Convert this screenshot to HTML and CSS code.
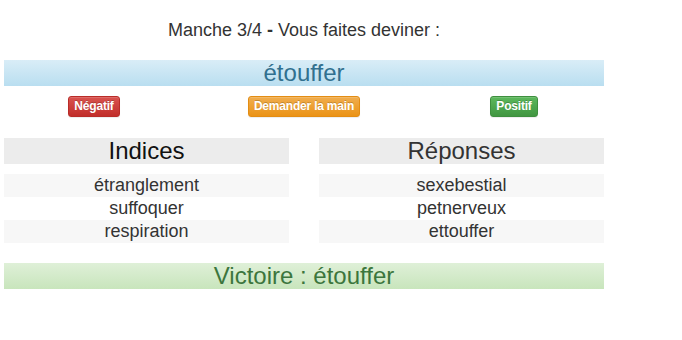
FILE: index.html
```html
<!DOCTYPE html>
<html lang="fr">

<head>
    <meta charset="UTF-8">
    <title>Manche 3/4</title>
    <link rel="stylesheet" href="styles.css">
</head>

<body>
    <div class="game">
        <p class="round">Manche 3/4 <b>-</b> Vous faites deviner :</p>
        <div class="word">étouffer</div>

        <div class="actions">
            <div class="cell"><button class="btn btn-danger">Négatif</button></div>
            <div class="cell"><button class="btn btn-warning">Demander la main</button></div>
            <div class="cell"><button class="btn btn-success">Positif</button></div>
        </div>

        <div class="columns">
            <div class="col">
                <div class="col-title dark">Indices</div>
                <ul class="list">
                    <li>étranglement</li>
                    <li>suffoquer</li>
                    <li>respiration</li>
                </ul>
            </div>
            <div class="col">
                <div class="col-title">Réponses</div>
                <ul class="list">
                    <li>sexebestial</li>
                    <li>petnerveux</li>
                    <li>ettouffer</li>
                </ul>
            </div>
        </div>

        <div class="victory">Victoire : étouffer</div>
    </div>
</body>

</html>
```

FILE: styles.css
```css
body {
    margin: 0;
    background-color: white;
    color: #333;
    font-family: "Liberation Sans", Arial, sans-serif;
}

.game {
    width: 600px;
    margin-left: 4px;
}

.round {
    margin: 17px 0 0 0;
    font-size: 18px;
    line-height: 26px;
    text-align: center;
}

.word {
    margin-top: 17px;
    height: 26px;
    line-height: 26px;
    font-size: 24px;
    text-align: center;
    color: #31708f;
    background-image: linear-gradient(to bottom, #d9edf7 0%, #b9def0 100%);
}

.actions {
    display: grid;
    grid-template-columns: repeat(3, 1fr);
    column-gap: 30px;
    margin-top: 10px;
}

.cell {
    display: flex;
    justify-content: center;
}

.btn {
    font-family: "Liberation Sans", Arial, sans-serif;
    font-size: 12px;
    font-weight: bold;
    letter-spacing: -0.2px;
    line-height: 15px;
    padding: 2px 5px;
    border: 1px solid;
    border-radius: 3px;
    color: white;
    text-shadow: 0 -1px 0 rgba(0, 0, 0, .2);
    box-shadow: inset 0 1px 0 rgba(255, 255, 255, .15), 0 1px 1px rgba(0, 0, 0, .075);
    cursor: pointer;
}

.btn-danger {
    background-image: linear-gradient(to bottom, #d9534f 0%, #c12e2a 100%);
    border-color: #b92c28;
}

.btn-warning {
    background-image: linear-gradient(to bottom, #f0ad4e 0%, #eb9316 100%);
    border-color: #e38d13;
}

.btn-success {
    background-image: linear-gradient(to bottom, #5cb85c 0%, #419641 100%);
    border-color: #3e8f3e;
}

.columns {
    display: grid;
    grid-template-columns: 1fr 1fr;
    column-gap: 30px;
    margin-top: 21px;
}

.col-title {
    height: 26px;
    line-height: 26px;
    font-size: 24px;
    text-align: center;
    background-color: #ececec;
}

.col-title.dark {
    color: #111;
}

.list {
    list-style: none;
    margin: 10px 0 0 0;
    padding: 0;
}

.list li {
    height: 23px;
    line-height: 23px;
    font-size: 18px;
    text-align: center;
}

.list li:nth-child(odd) {
    background-color: #f7f7f7;
}

.victory {
    margin-top: 20px;
    height: 26px;
    line-height: 26px;
    font-size: 24px;
    text-align: center;
    color: #3c763d;
    background-image: linear-gradient(to bottom, #dff0d8 0%, #c8e5bc 100%);
}
```
